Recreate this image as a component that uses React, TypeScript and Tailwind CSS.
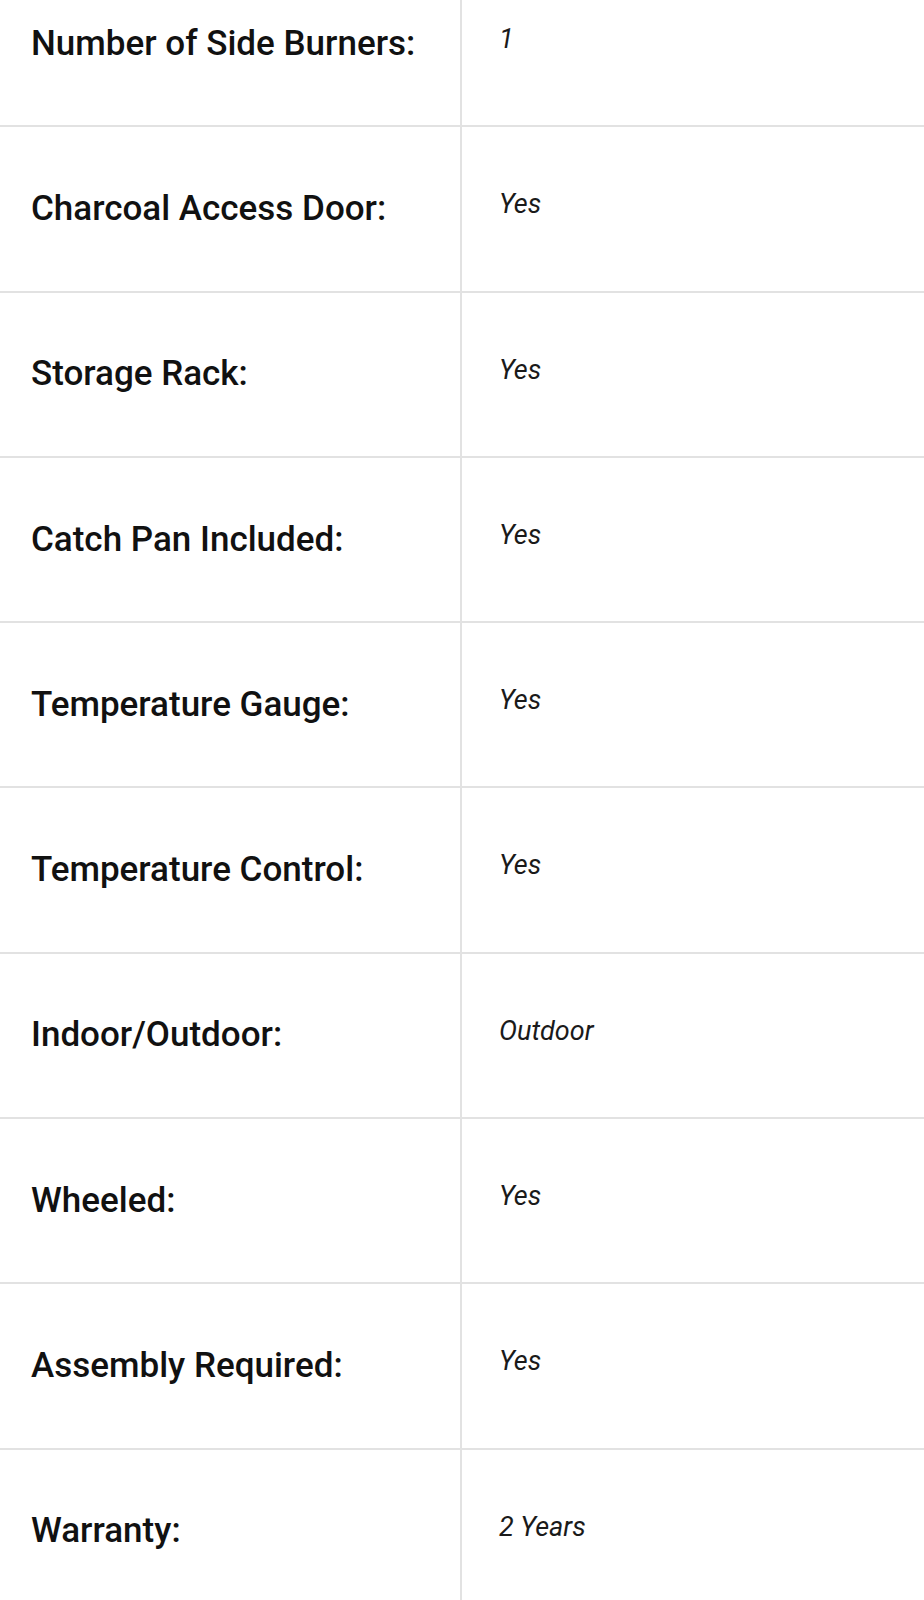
const specs = [
  { label: "Number of Side Burners:", value: "1" },
  { label: "Charcoal Access Door:", value: "Yes" },
  { label: "Storage Rack:", value: "Yes" },
  { label: "Catch Pan Included:", value: "Yes" },
  { label: "Temperature Gauge:", value: "Yes" },
  { label: "Temperature Control:", value: "Yes" },
  { label: "Indoor/Outdoor:", value: "Outdoor" },
  { label: "Wheeled:", value: "Yes" },
  { label: "Assembly Required:", value: "Yes" },
  { label: "Warranty:", value: "2 Years" },
];

export default function App() {
  return (
    <div className="w-[924px] h-[1600px] overflow-hidden bg-white">
      {/* spec table, scrolled so the first row is cut off */}
      <div className="-mt-[38px] flex flex-col">
        {specs.map((s) => (
          <div
            key={s.label}
            className="flex h-[165.3px] shrink-0 border-b-2 border-[#e2e2e2]"
          >
            <div className="w-[462px] shrink-0 flex items-center pl-[31px] border-r-2 border-[#e2e2e2]">
              <span className="font-['Roboto',sans-serif] font-medium text-[35px] leading-[40px] text-[#111]">
                {s.label}
              </span>
            </div>
            <div className="flex-1 pl-[37px] pt-[64px]">
              <span className="font-['Roboto',sans-serif] italic text-[27px] leading-none text-[#1a1a1a]">
                {s.value}
              </span>
            </div>
          </div>
        ))}
      </div>
    </div>
  );
}
